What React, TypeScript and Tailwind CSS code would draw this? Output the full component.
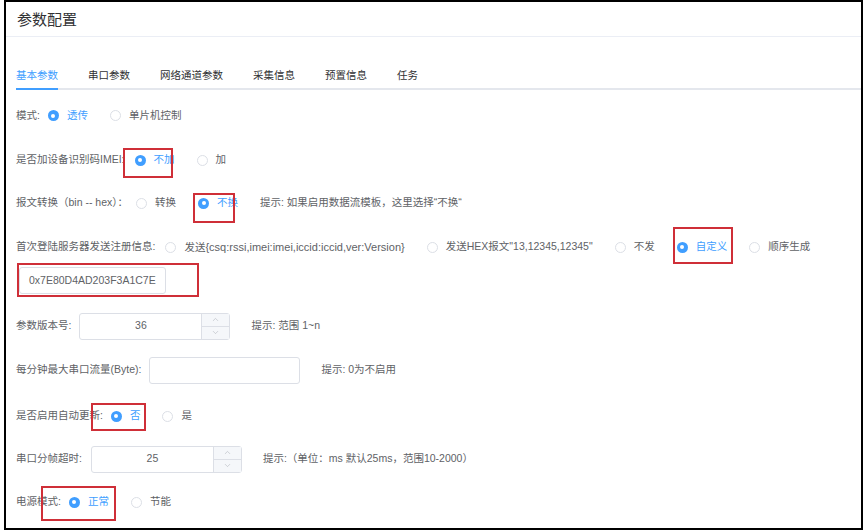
import React from 'react';
import { ChevronUp, ChevronDown } from 'lucide-react';

const Radio = ({ label, checked }: { label: React.ReactNode; checked?: boolean }) => (
  <span className="inline-flex items-center gap-[8px]">
    {checked ? (
      <span className="w-[11px] h-[11px] rounded-full bg-[#409eff] flex items-center justify-center">
        <span className="w-[4px] h-[4px] rounded-full bg-white" />
      </span>
    ) : (
      <span className="w-[11px] h-[11px] rounded-full border border-[#dcdfe6] bg-white" />
    )}
    <span className={checked ? 'text-[#409eff]' : 'text-[#606266]'}>{label}</span>
  </span>
);

const NumberInput = ({ value }: { value: string }) => (
  <div className="w-[151px] h-[27px] border border-[#dcdfe6] rounded-[3px] flex bg-white">
    <div className="flex-1 flex items-center justify-center text-[#606266]">{value}</div>
    <div className="w-[28px] border-l border-[#dcdfe6] bg-[#f5f7fa] flex flex-col">
      <div className="flex-1 flex items-center justify-center border-b border-[#dcdfe6]">
        <ChevronUp size={9} strokeWidth={1.5} className="text-[#b0b4bc]" />
      </div>
      <div className="flex-1 flex items-center justify-center">
        <ChevronDown size={9} strokeWidth={1.5} className="text-[#b0b4bc]" />
      </div>
    </div>
  </div>
);

const tabs = ['基本参数', '串口参数', '网络通道参数', '采集信息', '预置信息', '任务'];

export default function App() {
  return (
    <div className="relative w-[867px] h-[532px] bg-white overflow-hidden font-['Liberation_Sans','Noto_Sans_CJK_SC',sans-serif] text-[10.5px] text-[#606266]">
      <div className="ml-[4px] w-[859px] h-[530px] border-2 border-black overflow-hidden flex flex-col">
        {/* header */}
        <div className="h-[35px] shrink-0 border-b border-[#ebeef5] flex items-center pl-[11px]">
          <span className="text-[15px] text-[#303133] font-['Noto_Sans_CJK_SC',sans-serif]">参数配置</span>
        </div>

        {/* tabs */}
        <div className="ml-[10px] mt-[27px] flex gap-[30px] border-b-2 border-[#e4e7ed] shrink-0">
          {tabs.map((t, i) => (
            <div
              key={t}
              className={`h-[26px] flex items-center -mb-[2px] border-b-2 ${
                i === 0 ? 'border-[#409eff] text-[#409eff]' : 'border-transparent text-[#303133]'
              }`}
            >
              {t}
            </div>
          ))}
        </div>

        <div className="pl-[10px] flex flex-col">
          <div className="h-[51px] flex items-center gap-[8px]">
            <span>模式:</span>
            <div className="flex items-center gap-[22px]">
              <Radio label="透传" checked />
              <Radio label="单片机控制" />
            </div>
          </div>

          <div className="h-[38px] flex items-center gap-[10px]">
            <span>是否加设备识别码IMEI:</span>
            <div className="flex items-center gap-[22px]">
              <Radio label="不加" checked />
              <Radio label="加" />
            </div>
          </div>

          <div className="h-[48px] flex items-center gap-[8px]">
            <span>报文转换（bin -- hex）：</span>
            <div className="flex items-center gap-[22px]">
              <Radio label="转换" />
              <Radio label="不换" checked />
              <span>提示: 如果启用数据流模板，这里选择“不换“</span>
            </div>
          </div>

          <div className="h-[40px] flex items-center gap-[10px]">
            <span>首次登陆服务器发送注册信息:</span>
            <div className="flex items-center gap-[22px]">
              <Radio label={<>发送<span className="text-[11px]">{'{csq:rssi,imei:imei,iccid:iccid,ver:Version}'}</span></>} />
              <Radio label={'发送HEX报文"13,12345,12345"'} />
              <Radio label="不发" />
              <Radio label="自定义" checked />
              <Radio label="顺序生成" />
            </div>
          </div>

          <div className="h-[27px] flex items-center">
            <div className="ml-[3px] w-[147px] h-[27px] border border-[#dcdfe6] rounded-[3px] flex items-center pl-[9px] text-[#606266]">
              0x7E80D4AD203F3A1C7E
            </div>
          </div>

          <div className="mt-[10px] h-[44px] flex items-center gap-[8px]">
            <span>参数版本号:</span>
            <NumberInput value="36" />
            <span className="ml-[13px]">提示: 范围 1~n</span>
          </div>

          <div className="h-[44px] flex items-center gap-[8px]">
            <span>每分钟最大串口流量(Byte):</span>
            <div className="w-[151px] h-[27px] border border-[#dcdfe6] rounded-[3px] bg-white" />
            <span className="ml-[13px]">提示: 0为不启用</span>
          </div>

          <div className="h-[48px] flex items-center gap-[8px]">
            <span>是否启用自动更新:</span>
            <div className="flex items-center gap-[22px]">
              <Radio label="否" checked />
              <Radio label="是" />
            </div>
          </div>

          <div className="h-[38px] flex items-center gap-[9px]">
            <span>串口分帧超时:</span>
            <NumberInput value="25" />
            <span className="ml-[12px]">提示:（单位：ms 默认25ms，范围10-2000）</span>
          </div>

          <div className="h-[48px] flex items-center gap-[8px]">
            <span>电源模式:</span>
            <div className="flex items-center gap-[22px]">
              <Radio label="正常" checked />
              <Radio label="节能" />
            </div>
          </div>
        </div>
      </div>

      {/* red annotation boxes */}
      <div className="absolute left-[123px] top-[148px] w-[50px] h-[30px] border-2 border-[#cf2f38]" />
      <div className="absolute left-[193px] top-[193px] w-[42px] h-[30px] border-2 border-[#cf2f38]" />
      <div className="absolute left-[673px] top-[227px] w-[60px] h-[37px] border-2 border-[#cf2f38]" />
      <div className="absolute left-[17px] top-[263px] w-[182px] h-[34px] border-2 border-[#cf2f38]" />
      <div className="absolute left-[91px] top-[403px] w-[55px] h-[28px] border-2 border-[#cf2f38]" />
      <div className="absolute left-[41px] top-[486px] w-[75px] h-[35px] border-2 border-[#cf2f38]" />
    </div>
  );
}
